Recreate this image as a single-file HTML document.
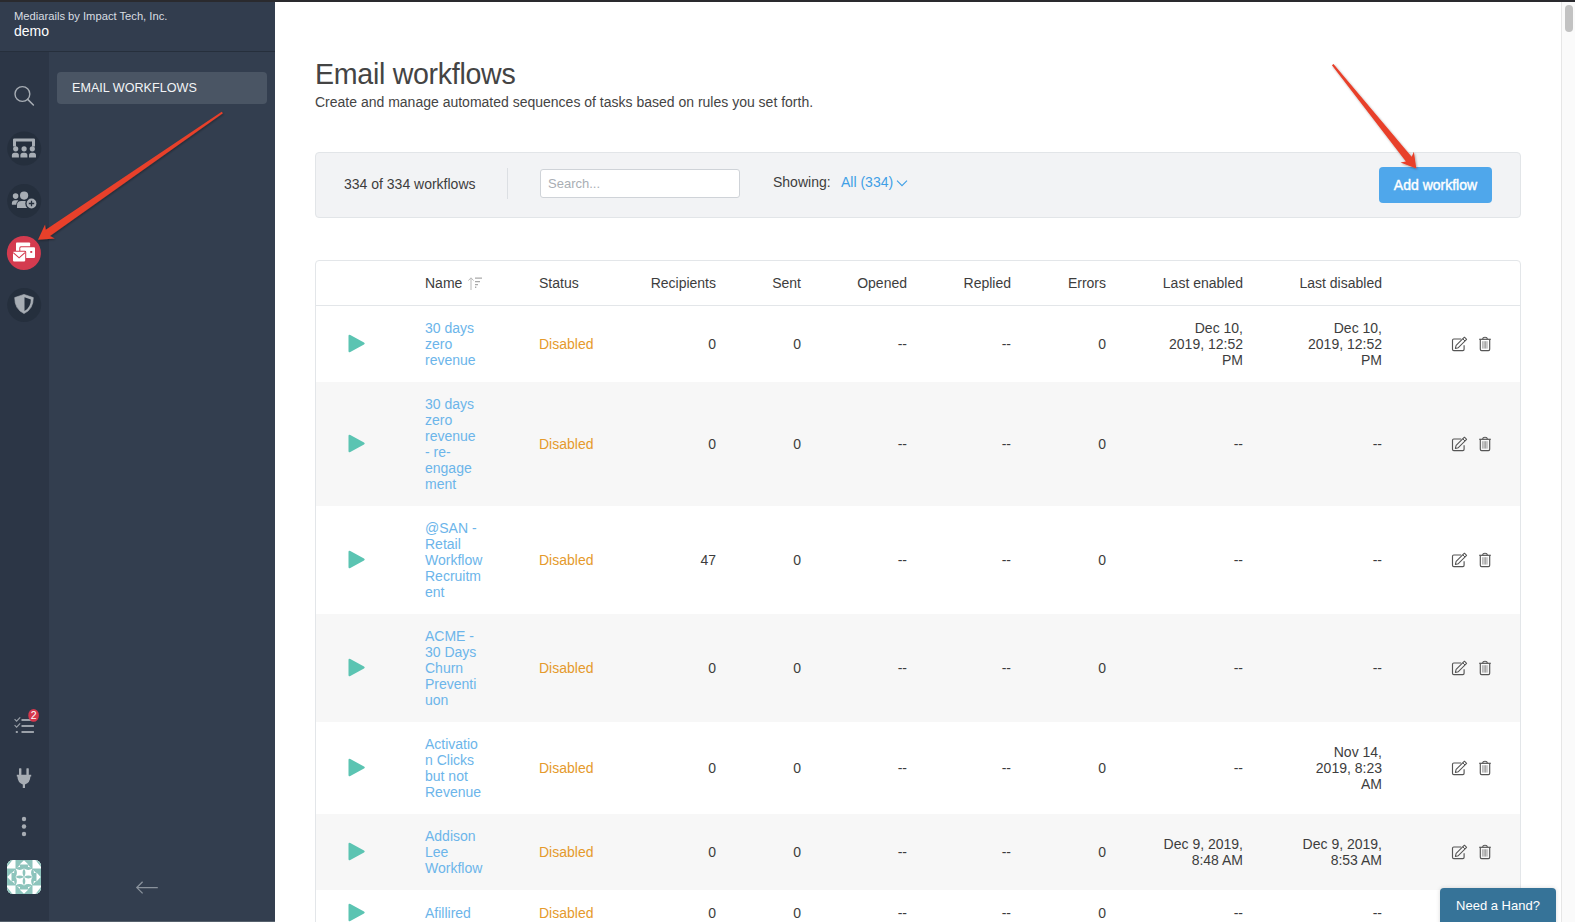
<!DOCTYPE html>
<html><head><meta charset="utf-8">
<style>
*{box-sizing:border-box;margin:0;padding:0}
html,body{width:1575px;height:922px;overflow:hidden;background:#fff}
body{font-family:"Liberation Sans",sans-serif;font-size:14px;line-height:16px;color:#3d3d3d;position:relative}
.abs{position:absolute}
#topbar{left:0;top:0;width:1575px;height:2px;background:#2a2a2e;z-index:5}
#hdr{left:0;top:2px;width:275px;height:50px;background:#323d4e;border-bottom:1px solid #262f3c}
#hdr .co{position:absolute;left:14px;top:8px;font-size:11.2px;line-height:12px;color:#d9dde2}
#hdr .dm{position:absolute;left:14px;top:21px;font-size:14px;line-height:16px;color:#fff}
#rail{left:0;top:52px;width:49px;height:870px;background:#2c3646}
#panel{left:49px;top:52px;width:226px;height:870px;background:#333e4f}
#navitem{left:57px;top:72px;width:210px;height:32px;background:#4a5564;border-radius:4px;color:#f2f4f6;font-size:12.6px;line-height:32px;padding-left:15px}
.ic{position:absolute;left:7px;width:34px;height:34px;border-radius:50%;background:#252f3e}
#main{left:275px;top:2px;width:1286px;height:920px;background:#fff}
#sb{left:1561px;top:2px;width:14px;height:920px;background:#fafafa;border-left:1px solid #e6e6e6}
#thumb{left:1565px;top:5px;width:8px;height:27px;border-radius:4px;background:#c2c2c2}
h1{position:absolute;left:315px;top:58px;font-size:28.6px;letter-spacing:-0.3px;line-height:32px;font-weight:normal;color:#444}
#sub{left:315px;top:94px;color:#444}
#bar{left:315px;top:152px;width:1206px;height:66px;background:#f2f3f5;border:1px solid #e2e5e8;border-radius:4px}
#count{left:344px;top:176px}
#div1{left:507px;top:168px;width:1px;height:31px;background:#dcdfe3}
#search{left:540px;top:169px;width:200px;height:29px;border:1px solid #cfd3d8;border-radius:3px;background:#fff;color:#a9aeb4;padding-left:7px;line-height:27px;font-size:13px}
#show{left:773px;top:174px}
#all{left:841px;top:174px;color:#3f9fe6}
#addbtn{left:1379px;top:167px;width:113px;height:36px;background:#4fa7eb;border-radius:4px;color:#fff;font-size:14px;-webkit-text-stroke:0.4px #fff;line-height:36px;text-align:center}
#tbl{left:315px;top:260px;width:1206px;height:700px;border:1px solid #e3e6e9;border-radius:4px;background:#fff;overflow:hidden}
#thead{left:316px;top:305px;width:1204px;height:1px;background:#e3e6e9}
.th{position:absolute;top:275px;color:#3d3d3d}
.row{position:absolute;left:316px;width:1204px;background:#fff}
.row.alt{background:#f7f7f7}
.c{position:absolute;top:0;bottom:0;display:flex;align-items:center}
.r{justify-content:flex-end;text-align:right}
.play{left:31px}
.act{left:1135px;gap:10px}
.nm{color:#6cb5ea}
.st{color:#e59a2c}
#help{left:1440px;top:888px;width:116px;height:40px;background:#367398;color:#fff;border-radius:4px 4px 0 0;text-align:center;line-height:35px;font-size:13px;box-shadow:0 0 4px rgba(0,0,0,.15)}
</style></head><body>
<div id="topbar" class="abs"></div>
<div id="hdr" class="abs"><div class="co">Mediarails by Impact Tech, Inc.</div><div class="dm">demo</div></div>
<div id="rail" class="abs"></div>
<div id="panel" class="abs"></div>
<div id="navitem" class="abs">EMAIL WORKFLOWS</div>
<div class="abs" style="left:0;top:921px;width:275px;height:1px;background:#56616d"></div>
<!-- rail icons -->
<svg class="abs" style="left:0;top:0;z-index:3" width="275" height="922" viewBox="0 0 275 922">
<circle cx="22.4" cy="94" r="7.4" fill="none" stroke="#a7adb4" stroke-width="1.4"/>
<line x1="27.7" y1="99.4" x2="33.4" y2="105" stroke="#a7adb4" stroke-width="1.5" stroke-linecap="round"/>
<circle cx="24.2" cy="148.5" r="17" fill="#252f3d"/>
<circle cx="24.2" cy="201" r="17" fill="#252f3d"/>
<circle cx="24.2" cy="305" r="17" fill="#252f3d"/>
<path d="M13 146.6 V139.6 Q13 138.4 14.2 138.4 H33.8 Q35 138.4 35 139.6 V146.6 H32 V141.4 H16 V146.6 Z" fill="#a7adb4"/>
<circle cx="15.7" cy="148.8" r="2.6" fill="#a7adb4"/>
<circle cx="24.1" cy="148.8" r="2.6" fill="#a7adb4"/>
<circle cx="32.3" cy="148.8" r="2.6" fill="#a7adb4"/>
<path d="M11.9 157.4 V155.4 Q11.9 152.8 14.5 152.8 H16.3 Q18.9 152.8 18.9 155.4 V157.4 Z" fill="#a7adb4"/>
<path d="M20.4 157.4 V155.4 Q20.4 152.8 23.0 152.8 H24.799999999999997 Q27.4 152.8 27.4 155.4 V157.4 Z" fill="#a7adb4"/>
<path d="M29 157.4 V155.4 Q29 152.8 31.6 152.8 H33.4 Q36 152.8 36 155.4 V157.4 Z" fill="#a7adb4"/>
<circle cx="15.6" cy="196.1" r="2.8" fill="#a7adb4"/>
<path d="M11.9 204.8 V203.2 Q11.9 200.2 15 200.2 H18.2 L18.2 204.8 Z" fill="#a7adb4"/>
<circle cx="24.1" cy="195.6" r="4.1" fill="#a7adb4"/>
<path d="M17 208 V205.2 Q17 201 21.4 201 H25 Q27 201 27.6 202.4 L27.6 208 Z" fill="#a7adb4" stroke="#252f3d" stroke-width="1.6" paint-order="stroke"/>
<circle cx="31.5" cy="203.5" r="6.2" fill="#252f3d"/>
<circle cx="31.5" cy="203.5" r="4.9" fill="#a7adb4"/>
<path d="M31.5 200.8 V206.2 M28.8 203.5 H34.2" stroke="#252f3d" stroke-width="1.3"/>
<circle cx="23.9" cy="253" r="17" fill="#d43b4f"/>
<rect x="16" y="242.5" width="14.1" height="9" rx="0.8" fill="#fff"/>
<rect x="19.3" y="246.3" width="16.7" height="12.6" rx="1.6" fill="#d43b4f"/>
<rect x="20.3" y="247.3" width="14.7" height="10.6" rx="1" fill="#fff"/>
<rect x="30.3" y="251" width="1.9" height="1.9" fill="#d43b4f"/>
<rect x="12" y="250.7" width="14.2" height="11.7" rx="1.4" fill="#d43b4f"/>
<rect x="13" y="251.7" width="12.2" height="9.7" rx="0.8" fill="#fff"/>
<path d="M13.2 252.6 L19.1 257.8 L25 252.6" fill="none" stroke="#d43b4f" stroke-width="1.1"/>
<path d="M24 294.4 L33.3 297.6 Q33.4 309.2 24 313.6 Q14.6 309.2 14.7 297.6 Z" fill="#a7adb4" stroke="#a7adb4" stroke-width="0.6" stroke-linejoin="round"/>
<path d="M24.5 297.3 L30.9 299.5 Q30.8 307.6 24.5 311 Z" fill="#252f3d"/>
<path d="M14.6 719.2 L16.6 721.2 L20.2 717.4" fill="none" stroke="#9ba1a9" stroke-width="1.1"/>
<path d="M14.6 725.2 L16.6 727.2 L20.2 723.4" fill="none" stroke="#9ba1a9" stroke-width="1.1"/>
<rect x="15.8" y="731" width="2" height="2" fill="#9ba1a9"/>
<rect x="21.5" y="719" width="12.4" height="2" fill="#9ba1a9"/>
<rect x="21.5" y="725" width="12.4" height="2" fill="#9ba1a9"/>
<rect x="21.5" y="731" width="12.4" height="2" fill="#9ba1a9"/>
<ellipse cx="33.6" cy="715.4" rx="5.3" ry="6.4" fill="#d5374c"/>
<text x="33.6" y="719.2" font-family="Liberation Sans" font-size="10.5" fill="#fff" text-anchor="middle">2</text>
<rect x="19" y="768.2" width="2.4" height="7" rx="0.6" fill="#a7adb4"/>
<rect x="26.4" y="768.2" width="2.4" height="7" rx="0.6" fill="#a7adb4"/>
<path d="M16.8 774.8 H31.2 V776.6 H30.4 Q30.2 782.8 25 784.4 V788 H22.8 V784.4 Q17.6 782.8 17.4 776.6 H16.8 Z" fill="#a7adb4"/>
<circle cx="24" cy="819" r="2.2" fill="#a7adb4"/>
<circle cx="24" cy="826.5" r="2.2" fill="#a7adb4"/>
<circle cx="24" cy="834" r="2.2" fill="#a7adb4"/>
<path d="M136.8 887.6 H157.8 M142.6 881.8 L136.8 887.6 L142.6 893.4" fill="none" stroke="#8a929c" stroke-width="1.3"/>
</svg>
<svg class="abs" style="left:7px;top:860px" width="34" height="34" viewBox="0 0 34 34">
<defs><clipPath id="avc"><rect x="0" y="0" width="34" height="34" rx="6"/></clipPath></defs>
<g clip-path="url(#avc)">
<rect width="34" height="34" fill="#8dc4bc"/>
<path d="M0 0 H8.5 V8.5 H0 Z M25.5 0 H34 V8.5 H25.5 Z M0 25.5 H8.5 V34 H0 Z M25.5 25.5 H34 V34 H25.5 Z M17 0.3 L12.6 4.5 H21.4 Z M17 33.7 L12.6 29.5 H21.4 Z M0.3 17 L4.5 12.6 V21.4 Z M33.7 17 L29.5 12.6 V21.4 Z M9.3 8.5 L13 4.9 V8.5 Z M24.7 8.5 L21 4.9 V8.5 Z M9.3 25.5 L13 29.1 V25.5 Z M24.7 25.5 L21 29.1 V25.5 Z M8.5 9.3 L4.9 13 H8.5 Z M8.5 24.7 L4.9 21 H8.5 Z M25.5 9.3 L29.1 13 H25.5 Z M25.5 24.7 L29.1 21 H25.5 Z M8.5 8.5 H25.5 V25.5 H8.5 Z" fill="#fff"/>
<path d="M0 0 L5.5 0 L0 7 Z M34 0 L28.5 0 L34 7 Z M0 34 L5.5 34 L0 27 Z M34 34 L28.5 34 L34 27 Z" fill="#8dc4bc"/>
<path d="M8.5,8.5 Q11.3,12.75 8.5,17 Q5.7,12.75 8.5,8.5 Z M8.5,8.5 Q12.75,11.3 17,8.5 Q12.75,5.7 8.5,8.5 Z M8.5,17 Q11.3,21.25 8.5,25.5 Q5.7,21.25 8.5,17 Z M17,8.5 Q21.25,11.3 25.5,8.5 Q21.25,5.7 17,8.5 Z M17,8.5 Q19.8,12.75 17,17 Q14.2,12.75 17,8.5 Z M8.5,17 Q12.75,19.8 17,17 Q12.75,14.2 8.5,17 Z M17,17 Q19.8,21.25 17,25.5 Q14.2,21.25 17,17 Z M17,17 Q21.25,19.8 25.5,17 Q21.25,14.2 17,17 Z M25.5,8.5 Q28.3,12.75 25.5,17 Q22.7,12.75 25.5,8.5 Z M8.5,25.5 Q12.75,28.3 17,25.5 Q12.75,22.7 8.5,25.5 Z M25.5,17 Q28.3,21.25 25.5,25.5 Q22.7,21.25 25.5,17 Z M17,25.5 Q21.25,28.3 25.5,25.5 Q21.25,22.7 17,25.5 Z" fill="#8dc4bc"/>
</g></svg>
<svg class="abs" style="left:0;top:0;z-index:10" width="1575" height="922" viewBox="0 0 1575 922">
<defs><filter id="sh" x="-10%" y="-10%" width="120%" height="120%"><feDropShadow dx="0.8" dy="1" stdDeviation="0.9" flood-color="#000" flood-opacity="0.35"/></filter></defs>
<polygon points="222.87,113.32 49.98,235.93 54.82,238.54 38.00,239.70 45.05,224.39 45.77,229.84 221.73,111.68" fill="#e8402a" filter="url(#sh)"/>
<polygon points="1333.48,63.97 1411.66,156.83 1413.91,151.81 1416.30,168.50 1400.51,162.59 1405.89,161.47 1331.92,65.23" fill="#e8402a" filter="url(#sh)"/>
</svg>
<div id="main" class="abs"></div>
<div id="sb" class="abs"></div>
<div id="thumb" class="abs"></div>

<h1>Email workflows</h1>
<div id="sub" class="abs">Create and manage automated sequences of tasks based on rules you set forth.</div>
<div id="bar" class="abs"></div>
<div id="count" class="abs">334 of 334 workflows</div>
<div id="div1" class="abs"></div>
<div id="search" class="abs">Search...</div>
<div id="show" class="abs">Showing:</div>
<div id="all" class="abs">All (334)</div>
<svg class="abs" style="left:895px;top:178px" width="14" height="10" viewBox="895 178 14 10"><path d="M897 180.6 L902 185.6 L907 180.6" fill="none" stroke="#3f9fe6" stroke-width="1.1"/></svg>
<div id="addbtn" class="abs">Add workflow</div>

<div id="tbl" class="abs"></div>
<div id="thead" class="abs"></div>
<div class="th" style="left:425px">Name</div>
<svg class="abs" style="left:466px;top:275px" width="18" height="16" viewBox="466 275 18 16"><path d="M471 290 V278 M468.4 280.6 L471 277.8 L473.6 280.6" fill="none" stroke="#b9b9b9" stroke-width="1"/><path d="M475 277.6 h7 v1.2 h-7 z M475 281 h5 v1.2 h-5 z M475 284 h3 v1.2 h-3 z M475 286.6 h1.3 v1.3 h-1.3 z" fill="#a9a9a9"/></svg>
<div class="th" style="left:539px">Status</div>
<div class="th" style="right:859px">Recipients</div>
<div class="th" style="right:774px">Sent</div>
<div class="th" style="right:668px">Opened</div>
<div class="th" style="right:564px">Replied</div>
<div class="th" style="right:469px">Errors</div>
<div class="th" style="right:332px">Last enabled</div>
<div class="th" style="right:193px">Last disabled</div>

<div class="row" style="top:306px;height:76px">
<div class="c play"><svg width="20" height="20" viewBox="0 0 20 20" style="overflow:visible"><path d="M3.3 1 Q1.5 0 1.5 2 L1.5 17 Q1.5 19 3.3 18 L17 10.5 Q18.6 9.5 17 8.5 Z" fill="#5bc4b2"/></svg></div>
<div class="c nm" style="left:109px">30 days<br>zero<br>revenue</div>
<div class="c st" style="left:223px">Disabled</div>
<div class="c r" style="right:804px">0</div>
<div class="c r" style="right:719px">0</div>
<div class="c r" style="right:613px">--</div>
<div class="c r" style="right:509px">--</div>
<div class="c r" style="right:414px">0</div>
<div class="c r" style="right:277px">Dec 10,<br>2019, 12:52<br>PM</div>
<div class="c r" style="right:138px">Dec 10,<br>2019, 12:52<br>PM</div>
<svg class="abs" style="left:1134px;top:30px" width="44" height="16" viewBox="0 0 44 16"><path d="M11.2 3 H3.8 Q2.5 3 2.5 4.3 V13.3 Q2.5 14.6 3.8 14.6 H12.8 Q14.1 14.6 14.1 13.3 V9.2" fill="none" stroke="#555" stroke-width="1.15"/><path d="M5.40,12.40 L8.33,11.66 L16.61,3.38 L14.42,1.19 L6.14,9.47 Z" fill="none" stroke="#555" stroke-width="1.05" stroke-linejoin="round"/><path d="M14.98,5.01 L12.79,2.82" stroke="#555" stroke-width="1"/><path d="M29.2 3.3 H40.8" stroke="#555" stroke-width="1.2"/><path d="M32.6 3.1 Q32.8 1.3 35 1.3 Q37.2 1.3 37.4 3.1" fill="none" stroke="#555" stroke-width="1.1"/><path d="M30.3 3.6 V13.3 Q30.3 14.6 31.6 14.6 H38.4 Q39.7 14.6 39.7 13.3 V3.6" fill="none" stroke="#555" stroke-width="1.15"/><path d="M32.8 5.2 V12.6 M34.2 5.2 V12.6 M35.6 5.2 V12.6 M37 5.2 V12.6" stroke="#888" stroke-width="0.8"/></svg>
</div>
<div class="row alt" style="top:382px;height:124px">
<div class="c play"><svg width="20" height="20" viewBox="0 0 20 20" style="overflow:visible"><path d="M3.3 1 Q1.5 0 1.5 2 L1.5 17 Q1.5 19 3.3 18 L17 10.5 Q18.6 9.5 17 8.5 Z" fill="#5bc4b2"/></svg></div>
<div class="c nm" style="left:109px">30 days<br>zero<br>revenue<br>- re-<br>engage<br>ment</div>
<div class="c st" style="left:223px">Disabled</div>
<div class="c r" style="right:804px">0</div>
<div class="c r" style="right:719px">0</div>
<div class="c r" style="right:613px">--</div>
<div class="c r" style="right:509px">--</div>
<div class="c r" style="right:414px">0</div>
<div class="c r" style="right:277px">--</div>
<div class="c r" style="right:138px">--</div>
<svg class="abs" style="left:1134px;top:54px" width="44" height="16" viewBox="0 0 44 16"><path d="M11.2 3 H3.8 Q2.5 3 2.5 4.3 V13.3 Q2.5 14.6 3.8 14.6 H12.8 Q14.1 14.6 14.1 13.3 V9.2" fill="none" stroke="#555" stroke-width="1.15"/><path d="M5.40,12.40 L8.33,11.66 L16.61,3.38 L14.42,1.19 L6.14,9.47 Z" fill="none" stroke="#555" stroke-width="1.05" stroke-linejoin="round"/><path d="M14.98,5.01 L12.79,2.82" stroke="#555" stroke-width="1"/><path d="M29.2 3.3 H40.8" stroke="#555" stroke-width="1.2"/><path d="M32.6 3.1 Q32.8 1.3 35 1.3 Q37.2 1.3 37.4 3.1" fill="none" stroke="#555" stroke-width="1.1"/><path d="M30.3 3.6 V13.3 Q30.3 14.6 31.6 14.6 H38.4 Q39.7 14.6 39.7 13.3 V3.6" fill="none" stroke="#555" stroke-width="1.15"/><path d="M32.8 5.2 V12.6 M34.2 5.2 V12.6 M35.6 5.2 V12.6 M37 5.2 V12.6" stroke="#888" stroke-width="0.8"/></svg>
</div>
<div class="row" style="top:506px;height:108px">
<div class="c play"><svg width="20" height="20" viewBox="0 0 20 20" style="overflow:visible"><path d="M3.3 1 Q1.5 0 1.5 2 L1.5 17 Q1.5 19 3.3 18 L17 10.5 Q18.6 9.5 17 8.5 Z" fill="#5bc4b2"/></svg></div>
<div class="c nm" style="left:109px">@SAN -<br>Retail<br>Workflow<br>Recruitm<br>ent</div>
<div class="c st" style="left:223px">Disabled</div>
<div class="c r" style="right:804px">47</div>
<div class="c r" style="right:719px">0</div>
<div class="c r" style="right:613px">--</div>
<div class="c r" style="right:509px">--</div>
<div class="c r" style="right:414px">0</div>
<div class="c r" style="right:277px">--</div>
<div class="c r" style="right:138px">--</div>
<svg class="abs" style="left:1134px;top:46px" width="44" height="16" viewBox="0 0 44 16"><path d="M11.2 3 H3.8 Q2.5 3 2.5 4.3 V13.3 Q2.5 14.6 3.8 14.6 H12.8 Q14.1 14.6 14.1 13.3 V9.2" fill="none" stroke="#555" stroke-width="1.15"/><path d="M5.40,12.40 L8.33,11.66 L16.61,3.38 L14.42,1.19 L6.14,9.47 Z" fill="none" stroke="#555" stroke-width="1.05" stroke-linejoin="round"/><path d="M14.98,5.01 L12.79,2.82" stroke="#555" stroke-width="1"/><path d="M29.2 3.3 H40.8" stroke="#555" stroke-width="1.2"/><path d="M32.6 3.1 Q32.8 1.3 35 1.3 Q37.2 1.3 37.4 3.1" fill="none" stroke="#555" stroke-width="1.1"/><path d="M30.3 3.6 V13.3 Q30.3 14.6 31.6 14.6 H38.4 Q39.7 14.6 39.7 13.3 V3.6" fill="none" stroke="#555" stroke-width="1.15"/><path d="M32.8 5.2 V12.6 M34.2 5.2 V12.6 M35.6 5.2 V12.6 M37 5.2 V12.6" stroke="#888" stroke-width="0.8"/></svg>
</div>
<div class="row alt" style="top:614px;height:108px">
<div class="c play"><svg width="20" height="20" viewBox="0 0 20 20" style="overflow:visible"><path d="M3.3 1 Q1.5 0 1.5 2 L1.5 17 Q1.5 19 3.3 18 L17 10.5 Q18.6 9.5 17 8.5 Z" fill="#5bc4b2"/></svg></div>
<div class="c nm" style="left:109px">ACME -<br>30 Days<br>Churn<br>Preventi<br>uon</div>
<div class="c st" style="left:223px">Disabled</div>
<div class="c r" style="right:804px">0</div>
<div class="c r" style="right:719px">0</div>
<div class="c r" style="right:613px">--</div>
<div class="c r" style="right:509px">--</div>
<div class="c r" style="right:414px">0</div>
<div class="c r" style="right:277px">--</div>
<div class="c r" style="right:138px">--</div>
<svg class="abs" style="left:1134px;top:46px" width="44" height="16" viewBox="0 0 44 16"><path d="M11.2 3 H3.8 Q2.5 3 2.5 4.3 V13.3 Q2.5 14.6 3.8 14.6 H12.8 Q14.1 14.6 14.1 13.3 V9.2" fill="none" stroke="#555" stroke-width="1.15"/><path d="M5.40,12.40 L8.33,11.66 L16.61,3.38 L14.42,1.19 L6.14,9.47 Z" fill="none" stroke="#555" stroke-width="1.05" stroke-linejoin="round"/><path d="M14.98,5.01 L12.79,2.82" stroke="#555" stroke-width="1"/><path d="M29.2 3.3 H40.8" stroke="#555" stroke-width="1.2"/><path d="M32.6 3.1 Q32.8 1.3 35 1.3 Q37.2 1.3 37.4 3.1" fill="none" stroke="#555" stroke-width="1.1"/><path d="M30.3 3.6 V13.3 Q30.3 14.6 31.6 14.6 H38.4 Q39.7 14.6 39.7 13.3 V3.6" fill="none" stroke="#555" stroke-width="1.15"/><path d="M32.8 5.2 V12.6 M34.2 5.2 V12.6 M35.6 5.2 V12.6 M37 5.2 V12.6" stroke="#888" stroke-width="0.8"/></svg>
</div>
<div class="row" style="top:722px;height:92px">
<div class="c play"><svg width="20" height="20" viewBox="0 0 20 20" style="overflow:visible"><path d="M3.3 1 Q1.5 0 1.5 2 L1.5 17 Q1.5 19 3.3 18 L17 10.5 Q18.6 9.5 17 8.5 Z" fill="#5bc4b2"/></svg></div>
<div class="c nm" style="left:109px">Activatio<br>n Clicks<br>but not<br>Revenue</div>
<div class="c st" style="left:223px">Disabled</div>
<div class="c r" style="right:804px">0</div>
<div class="c r" style="right:719px">0</div>
<div class="c r" style="right:613px">--</div>
<div class="c r" style="right:509px">--</div>
<div class="c r" style="right:414px">0</div>
<div class="c r" style="right:277px">--</div>
<div class="c r" style="right:138px">Nov 14,<br>2019, 8:23<br>AM</div>
<svg class="abs" style="left:1134px;top:38px" width="44" height="16" viewBox="0 0 44 16"><path d="M11.2 3 H3.8 Q2.5 3 2.5 4.3 V13.3 Q2.5 14.6 3.8 14.6 H12.8 Q14.1 14.6 14.1 13.3 V9.2" fill="none" stroke="#555" stroke-width="1.15"/><path d="M5.40,12.40 L8.33,11.66 L16.61,3.38 L14.42,1.19 L6.14,9.47 Z" fill="none" stroke="#555" stroke-width="1.05" stroke-linejoin="round"/><path d="M14.98,5.01 L12.79,2.82" stroke="#555" stroke-width="1"/><path d="M29.2 3.3 H40.8" stroke="#555" stroke-width="1.2"/><path d="M32.6 3.1 Q32.8 1.3 35 1.3 Q37.2 1.3 37.4 3.1" fill="none" stroke="#555" stroke-width="1.1"/><path d="M30.3 3.6 V13.3 Q30.3 14.6 31.6 14.6 H38.4 Q39.7 14.6 39.7 13.3 V3.6" fill="none" stroke="#555" stroke-width="1.15"/><path d="M32.8 5.2 V12.6 M34.2 5.2 V12.6 M35.6 5.2 V12.6 M37 5.2 V12.6" stroke="#888" stroke-width="0.8"/></svg>
</div>
<div class="row alt" style="top:814px;height:76px">
<div class="c play"><svg width="20" height="20" viewBox="0 0 20 20" style="overflow:visible"><path d="M3.3 1 Q1.5 0 1.5 2 L1.5 17 Q1.5 19 3.3 18 L17 10.5 Q18.6 9.5 17 8.5 Z" fill="#5bc4b2"/></svg></div>
<div class="c nm" style="left:109px">Addison<br>Lee<br>Workflow</div>
<div class="c st" style="left:223px">Disabled</div>
<div class="c r" style="right:804px">0</div>
<div class="c r" style="right:719px">0</div>
<div class="c r" style="right:613px">--</div>
<div class="c r" style="right:509px">--</div>
<div class="c r" style="right:414px">0</div>
<div class="c r" style="right:277px">Dec 9, 2019,<br>8:48 AM</div>
<div class="c r" style="right:138px">Dec 9, 2019,<br>8:53 AM</div>
<svg class="abs" style="left:1134px;top:30px" width="44" height="16" viewBox="0 0 44 16"><path d="M11.2 3 H3.8 Q2.5 3 2.5 4.3 V13.3 Q2.5 14.6 3.8 14.6 H12.8 Q14.1 14.6 14.1 13.3 V9.2" fill="none" stroke="#555" stroke-width="1.15"/><path d="M5.40,12.40 L8.33,11.66 L16.61,3.38 L14.42,1.19 L6.14,9.47 Z" fill="none" stroke="#555" stroke-width="1.05" stroke-linejoin="round"/><path d="M14.98,5.01 L12.79,2.82" stroke="#555" stroke-width="1"/><path d="M29.2 3.3 H40.8" stroke="#555" stroke-width="1.2"/><path d="M32.6 3.1 Q32.8 1.3 35 1.3 Q37.2 1.3 37.4 3.1" fill="none" stroke="#555" stroke-width="1.1"/><path d="M30.3 3.6 V13.3 Q30.3 14.6 31.6 14.6 H38.4 Q39.7 14.6 39.7 13.3 V3.6" fill="none" stroke="#555" stroke-width="1.15"/><path d="M32.8 5.2 V12.6 M34.2 5.2 V12.6 M35.6 5.2 V12.6 M37 5.2 V12.6" stroke="#888" stroke-width="0.8"/></svg>
</div>
<div class="row" style="top:890px;height:46px">
<div class="c play"><svg width="20" height="20" viewBox="0 0 20 20" style="overflow:visible"><path d="M3.3 1 Q1.5 0 1.5 2 L1.5 17 Q1.5 19 3.3 18 L17 10.5 Q18.6 9.5 17 8.5 Z" fill="#5bc4b2"/></svg></div>
<div class="c nm" style="left:109px">Afillired</div>
<div class="c st" style="left:223px">Disabled</div>
<div class="c r" style="right:804px">0</div>
<div class="c r" style="right:719px">0</div>
<div class="c r" style="right:613px">--</div>
<div class="c r" style="right:509px">--</div>
<div class="c r" style="right:414px">0</div>
<div class="c r" style="right:277px">--</div>
<div class="c r" style="right:138px">--</div>
<svg class="abs" style="left:1134px;top:15px" width="44" height="16" viewBox="0 0 44 16"><path d="M11.2 3 H3.8 Q2.5 3 2.5 4.3 V13.3 Q2.5 14.6 3.8 14.6 H12.8 Q14.1 14.6 14.1 13.3 V9.2" fill="none" stroke="#555" stroke-width="1.15"/><path d="M5.40,12.40 L8.33,11.66 L16.61,3.38 L14.42,1.19 L6.14,9.47 Z" fill="none" stroke="#555" stroke-width="1.05" stroke-linejoin="round"/><path d="M14.98,5.01 L12.79,2.82" stroke="#555" stroke-width="1"/><path d="M29.2 3.3 H40.8" stroke="#555" stroke-width="1.2"/><path d="M32.6 3.1 Q32.8 1.3 35 1.3 Q37.2 1.3 37.4 3.1" fill="none" stroke="#555" stroke-width="1.1"/><path d="M30.3 3.6 V13.3 Q30.3 14.6 31.6 14.6 H38.4 Q39.7 14.6 39.7 13.3 V3.6" fill="none" stroke="#555" stroke-width="1.15"/><path d="M32.8 5.2 V12.6 M34.2 5.2 V12.6 M35.6 5.2 V12.6 M37 5.2 V12.6" stroke="#888" stroke-width="0.8"/></svg>
</div>

<div id="help" class="abs">Need a Hand?</div>
</body></html>
